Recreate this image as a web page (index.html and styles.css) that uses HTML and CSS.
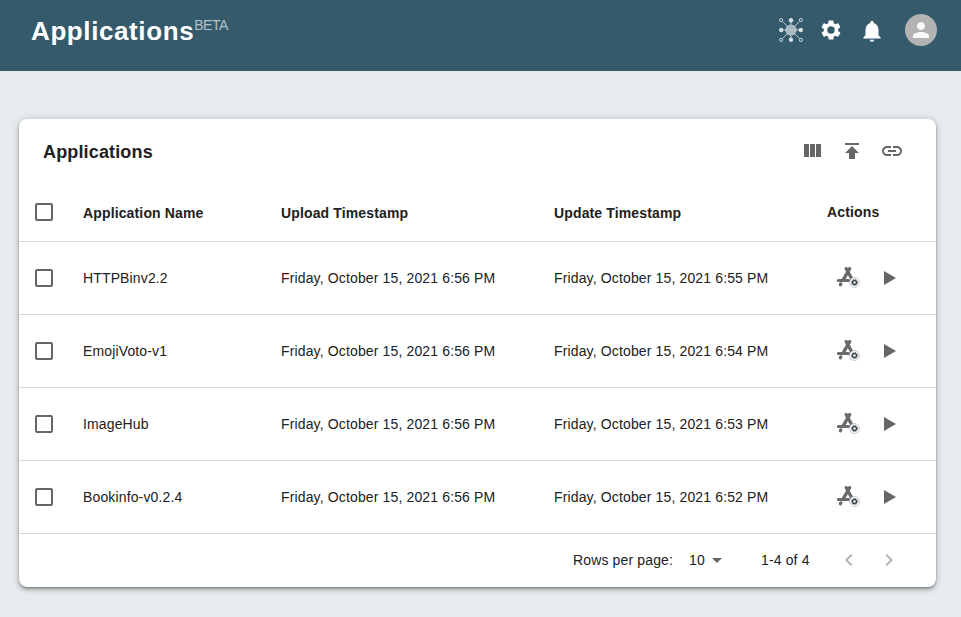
FILE: index.html
```html
<!DOCTYPE html>
<html lang="en">
<head>
<meta charset="utf-8">
<title>Applications</title>
<link rel="stylesheet" href="styles.css">
</head>
<body>
<svg class="defs" width="0" height="0" aria-hidden="true">
  <symbol id="app" viewBox="0 0 24 24">
    <g fill="none" stroke="#6a6a6a" stroke-width="3.3" stroke-linecap="round">
      <path d="M10.2 2.6 11.2 4.6M13.7 2.6 7.2 13.8M11.8 5.6 16.4 14M4.9 17.9 4.4 18.8"/>
      <path d="M2.4 14.5H12.6" stroke-width="3"/>
    </g>
    <circle cx="18.5" cy="16.5" r="4.9" fill="#fff" stroke="#aaa" stroke-width=".7"/>
    <circle cx="18.5" cy="16.5" r="2" fill="none" stroke="#3c494f" stroke-width="1.5"/>
    <circle cx="18.5" cy="16.5" r="3" fill="none" stroke="#3c494f" stroke-width=".9" stroke-dasharray="1.25 1.106"/>
  </symbol>
  <symbol id="play" viewBox="0 0 24 24"><path d="M7 5v14L19 12z" fill="#666"/></symbol>
</svg>
<header class="bar">
  <h1>Applications<sup>BETA</sup></h1>
  <nav>
    <svg class="mesh" width="24" height="24" viewBox="0 0 24 24">
      <g fill="none" stroke="#b9c9d0" stroke-width="1">
        <path d="M12 2v20M2 12h20M3.5 3.5l17 17M20.5 3.5l-17 17"/>
        <g fill="#355a6c" stroke="#c8d5da"><circle cx="2.1" cy="2.1" r="1.6"/><circle cx="21.9" cy="2.1" r="1.6"/><circle cx="2.1" cy="21.9" r="1.6"/><circle cx="21.9" cy="21.9" r="1.6"/></g>
      </g>
      <g fill="#d5dfe3"><circle cx="12" cy="2.2" r="2.2"/><circle cx="12" cy="21.8" r="2.2"/><circle cx="2.2" cy="12" r="2.2"/><circle cx="21.8" cy="12" r="2.2"/></g>
      <circle cx="12" cy="12" r="5.6" fill="#bccbd1"/>
      <g fill="none" stroke="#8ba1ab" stroke-width=".6"><ellipse cx="12" cy="12" rx="2.6" ry="5"/><path d="M7 10h10M7 14h10M12 7v10"/></g>
    </svg>
    <svg class="gear" width="24" height="24" viewBox="0 0 24 24"><path fill="#fff" transform="translate(.5 .5) scale(.958)" d="M19.43 12.98c.04-.32.07-.64.07-.98s-.03-.66-.07-.98l2.11-1.65c.19-.15.24-.42.12-.64l-2-3.46c-.12-.22-.39-.3-.61-.22l-2.49 1c-.52-.4-1.08-.73-1.69-.98l-.38-2.65C14.46 2.18 14.25 2 14 2h-4c-.25 0-.46.18-.49.42l-.38 2.65c-.61.25-1.17.59-1.69.98l-2.49-1c-.23-.09-.49 0-.61.22l-2 3.46c-.13.22-.07.49.12.64l2.11 1.65c-.04.32-.07.65-.07.98s.03.66.07.98l-2.11 1.65c-.19.15-.24.42-.12.64l2 3.46c.12.22.39.3.61.22l2.49-1c.52.4 1.08.73 1.69.98l.38 2.65c.03.24.24.42.49.42h4c.25 0 .46-.18.49-.42l.38-2.65c.61-.25 1.17-.59 1.69-.98l2.49 1c.23.09.49 0 .61-.22l2-3.46c.12-.22.07-.49-.12-.64l-2.11-1.65zM12 15.9a3.9 3.9 0 1 1 0-7.8 3.9 3.9 0 0 1 0 7.8z"/></svg>
    <svg class="bell" width="26" height="26" viewBox="0 0 24 24"><path fill="#fff" d="M12 22c1.1 0 2-.9 2-2h-4c0 1.1.89 2 2 2zm6-6v-5c0-3.07-1.64-5.64-4.5-6.32V4c0-.83-.67-1.5-1.5-1.5s-1.5.67-1.5 1.5v.68C7.63 5.36 6 7.92 6 11v5l-2 2v1h16v-1l-2-2z"/></svg>
    <span class="avatar"><svg width="24" height="24" viewBox="0 0 24 24"><path fill="#fafafa" d="M12 12c2.21 0 4-1.79 4-4s-1.79-4-4-4-4 1.79-4 4 1.79 4 4 4zm0 2c-2.67 0-8 1.34-8 4v2h16v-2c0-2.66-5.33-4-8-4z"/></svg></span>
  </nav>
</header>
<main class="card">
  <div class="toolbar">
    <h2>Applications</h2>
    <div class="tools">
      <svg width="24" height="24" viewBox="0 0 24 24"><path d="M10 18h5V5h-5v13zm-6 0h5V5H4v13zM16 5v13h5V5h-5z"/></svg>
      <svg width="24" height="24" viewBox="0 0 24 24"><path d="M5 4v2h14V4H5zm0 10h4v6h6v-6h4l-7-7-7 7z"/></svg>
      <svg width="24" height="24" viewBox="0 0 24 24"><path d="M3.9 12c0-1.71 1.39-3.1 3.1-3.1h4V7H7c-2.76 0-5 2.24-5 5s2.24 5 5 5h4v-1.9H7c-1.71 0-3.1-1.39-3.1-3.1zM8 13h8v-2H8v2zm9-6h-4v1.9h4c1.71 0 3.1 1.39 3.1 3.1s-1.39 3.1-3.1 3.1h-4V17h4c2.76 0 5-2.24 5-5s-2.24-5-5-5z"/></svg>
    </div>
  </div>
  <div class="row head"><i class="check"></i><span>Application Name</span><span>Upload Timestamp</span><span>Update Timestamp</span><span class="actions-title">Actions</span></div>
  <div class="row"><i class="check"></i><span>HTTPBinv2.2</span><span>Friday, October 15, 2021 6:56 PM</span><span>Friday, October 15, 2021 6:55 PM</span><div class="actions"><svg width="24" height="24"><use href="#app"/></svg><svg width="24" height="24"><use href="#play"/></svg></div></div>
  <div class="row"><i class="check"></i><span>EmojiVoto-v1</span><span>Friday, October 15, 2021 6:56 PM</span><span>Friday, October 15, 2021 6:54 PM</span><div class="actions"><svg width="24" height="24"><use href="#app"/></svg><svg width="24" height="24"><use href="#play"/></svg></div></div>
  <div class="row"><i class="check"></i><span>ImageHub</span><span>Friday, October 15, 2021 6:56 PM</span><span>Friday, October 15, 2021 6:53 PM</span><div class="actions"><svg width="24" height="24"><use href="#app"/></svg><svg width="24" height="24"><use href="#play"/></svg></div></div>
  <div class="row"><i class="check"></i><span>Bookinfo-v0.2.4</span><span>Friday, October 15, 2021 6:56 PM</span><span>Friday, October 15, 2021 6:52 PM</span><div class="actions"><svg width="24" height="24"><use href="#app"/></svg><svg width="24" height="24"><use href="#play"/></svg></div></div>
  <footer class="pager">
    <span class="label">Rows per page:</span>
    <span class="size">10</span>
    <svg class="caret" width="24" height="24" viewBox="0 0 24 24"><path d="M7 10l5 5 5-5z" fill="#666"/></svg>
    <span class="range">1-4 of 4</span>
    <svg class="prev" width="24" height="24" viewBox="0 0 24 24"><path d="M15.41 7.41L14 6l-6 6 6 6 1.41-1.41L10.83 12z" fill="#b4b4b4"/></svg>
    <svg width="24" height="24" viewBox="0 0 24 24"><path d="M10 6L8.59 7.41 13.17 12l-4.58 4.59L10 18l6-6z" fill="#b4b4b4"/></svg>
  </footer>
</main>
</body>
</html>
```
FILE: styles.css
```css
* { box-sizing: border-box; }
body {
  margin: 0;
  height: 617px;
  overflow: hidden;
  background: #e7ecee;
  color: #212121;
  font: 14px/20px "Liberation Sans", Arial, sans-serif;
  letter-spacing: .14px;
}
svg { display: block; flex: none; }
.defs { position: absolute; }
h1, h2 { margin: 0; }
.bar {
  display: flex;
  justify-content: space-between;
  height: 71px;
  padding: 14px 24px 0 31px;
  background: #355a6c;
  color: #fff;
}
h1 { font-size: 26px; line-height: 34px; letter-spacing: .6px; display: flex; }
sup { font-size: 14px; line-height: 23px; font-weight: 400; letter-spacing: -.5px; color: #b4c3ca; }
nav { display: flex; align-items: center; height: 32px; }
.gear { margin-left: 16px; }
.bell { margin: 2px 20px 0 16px; }
.avatar {
  display: grid;
  place-items: center;
  width: 32px;
  height: 32px;
  border-radius: 50%;
  background: #b3b3b3;
}
.card {
  margin: 48px 25px 0 19px;
  height: 468px;
  border-radius: 8px;
  background: #fff;
  box-shadow: 0 3px 4px -1px rgba(0,0,0,.3), 0 1px 2px rgba(0,0,0,.2), 0 1px 8px rgba(0,0,0,.2);
}
.toolbar {
  display: flex;
  align-items: center;
  justify-content: space-between;
  height: 64px;
  padding: 0 32px 0 24px;
}
h2 { font-size: 18px; line-height: 24px; letter-spacing: .15px; padding-top: 2px; }
.tools { display: flex; gap: 16px; fill: #666; }
.row {
  display: grid;
  grid-template-columns: 64px 198px 273px 273px 1fr;
  align-items: center;
  height: 73px;
  border-bottom: 1px solid #dadada;
}
.head { height: 59px; font-weight: 700; }
.head > span { padding-top: 2px; }
.head > .actions-title { padding-top: 0; }
.check {
  width: 18px;
  height: 18px;
  margin-left: 16px;
  border: 2px solid #666;
  border-radius: 2px;
}
.actions { display: flex; gap: 17px; padding-left: 9px; }
.pager { display: flex; align-items: center; height: 52px; padding-left: 554px; }
.label { width: 116px; }
.size { width: 16px; padding-bottom: 1px; }
.caret { margin-right: 33px; }
.range { width: 76px; margin-left: -1px; }
.prev { margin-right: 16px; }
```
